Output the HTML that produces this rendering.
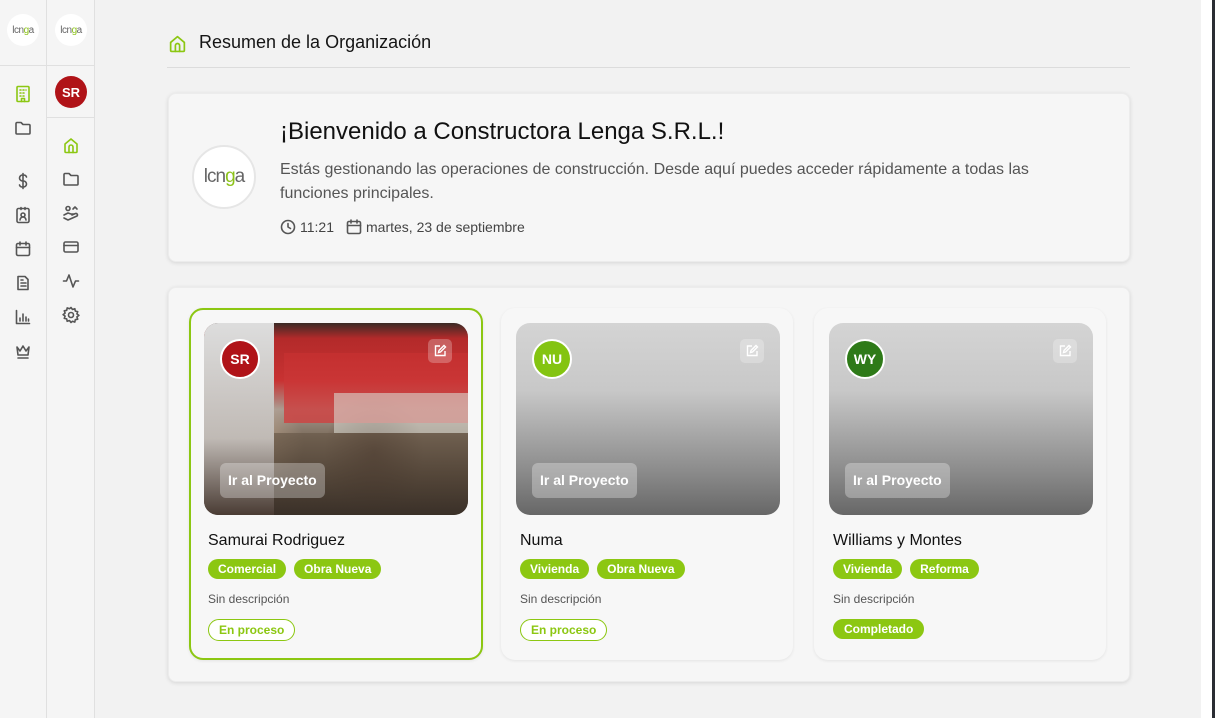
<!DOCTYPE html>
<html><head><meta charset="utf-8"><style>
*{box-sizing:border-box;margin:0;padding:0}
body{width:1215px;height:718px;overflow:hidden;background:#f2f2f2;font-family:"Liberation Sans",sans-serif;position:relative;color:#1a1a1a}
.abs{position:absolute}
.sb1{left:0;top:0;width:47px;height:718px;background:#f5f5f5;border-right:1px solid #e0e0e0}
.sb2{left:47px;top:0;width:48px;height:718px;background:#f5f5f5;border-right:1px solid #e0e0e0}
.logo{width:32px;height:32px;border-radius:50%;background:#fff;font-size:10px;color:#666;display:flex;align-items:center;justify-content:center;letter-spacing:-0.5px}
.logo b{color:#8cc21a;font-weight:normal}
.ic{position:absolute;width:18px;height:18px;fill:none;stroke:#555;stroke-width:1.6;stroke-linecap:round;stroke-linejoin:round}
.card{background:#f6f6f6;border:1px solid #ececec;border-radius:8px;box-shadow:0 1px 4px rgba(0,0,0,.12)}
.pc{position:absolute;top:308px;height:352px;border-radius:14px;background:#f7f7f7;box-shadow:0 1px 3px rgba(0,0,0,.08)}
.img{position:absolute;left:15px;top:15px;width:264px;height:192px;border-radius:14px;overflow:hidden}
.grey{background:linear-gradient(#d4d4d4 0%,#c8c8c8 35%,#8a8a8a 78%,#676767 100%)}
.av{position:absolute;left:16px;top:16px;width:40px;height:40px;border-radius:50%;color:#fff;font-weight:bold;font-size:14px;display:flex;align-items:center;justify-content:center;border:2px solid #fff}
.ed{position:absolute;right:16px;top:16px;width:24px;height:24px;border-radius:5px;background:rgba(255,255,255,.25);display:flex;align-items:center;justify-content:center}
.go{position:absolute;left:16px;top:140px;height:35px;padding:0 8px;border-radius:6px;background:rgba(255,255,255,.3);color:#fff;font-weight:bold;font-size:14px;line-height:35px}
.nm{position:absolute;left:19px;top:224px;font-size:16px;color:#111}
.tags{position:absolute;left:19px;top:251px;display:flex;gap:8px}
.tag{background:#8cc712;color:#fff;font-weight:bold;font-size:12px;height:20px;line-height:20px;padding:0 10px;border-radius:10px}
.ds{position:absolute;left:19px;top:284px;font-size:12px;color:#555}
.st{position:absolute;left:19px;top:311px;font-size:12px;font-weight:bold;height:22px;line-height:20px;padding:0 10px;border-radius:11px;border:1px solid #8cc712;color:#8cc712}
</style></head><body>
<div class="abs sb1"></div><div class="abs sb2"></div>
<div class="abs" style="left:0;top:65px;width:47px;border-top:1px solid #e0e0e0"></div>
<div class="abs" style="left:47px;top:65px;width:48px;border-top:1px solid #e0e0e0"></div>
<div class="abs" style="left:47px;top:117px;width:48px;border-top:1px solid #e0e0e0"></div>
<div class="abs logo" style="left:7px;top:14px">lcn<b>g</b>a</div>
<div class="abs logo" style="left:55px;top:14px">lcn<b>g</b>a</div>
<div class="abs" style="left:55px;top:76px;width:32px;height:32px;border-radius:50%;background:#b01318;color:#fff;font-weight:bold;font-size:13px;display:flex;align-items:center;justify-content:center">SR</div>
<svg class="ic" style="left:14px;top:85px;stroke:#8cc712" viewBox="0 0 18 18"><rect x="3" y="1.5" width="12" height="15" rx="1"/><path d="M6 5h1M9 5h1M12 5h0M6 8h1M9 8h1M6 11h1M9 11h1M7.5 16.5v-3h3v3"/></svg>
<svg class="ic" style="left:14px;top:119px" viewBox="0 0 18 18"><path d="M2 4.5a1 1 0 0 1 1-1h4l2 2h6a1 1 0 0 1 1 1v7.5a1 1 0 0 1-1 1H3a1 1 0 0 1-1-1z"/></svg>
<svg class="ic" style="left:14px;top:172px" viewBox="0 0 18 18"><path d="M9 1.5v15M12.5 5a3 3 0 0 0-3-2h-1a3 3 0 0 0 0 6h1a3 3 0 0 1 0 6h-1a3 3 0 0 1-3-2"/></svg>
<svg class="ic" style="left:14px;top:206px" viewBox="0 0 18 18"><rect x="3" y="2.5" width="12" height="14" rx="1.5"/><path d="M7 1.5v2M11 1.5v2"/><circle cx="9" cy="9" r="2"/><path d="M6 14a3 3 0 0 1 6 0"/></svg>
<svg class="ic" style="left:14px;top:240px" viewBox="0 0 18 18"><rect x="2.5" y="3.5" width="13" height="12" rx="1.5"/><path d="M6 2v3M12 2v3M2.5 7.5h13"/></svg>
<svg class="ic" style="left:14px;top:274px" viewBox="0 0 18 18"><path d="M4 2.5h7l3 3v10H4z"/><path d="M7 9h5M7 12h5M7 6h2"/></svg>
<svg class="ic" style="left:14px;top:308px" viewBox="0 0 18 18"><path d="M2.5 2.5v13h13M6 13v-3M9 13V6M12 13V9M14.5 13v-2"/></svg>
<svg class="ic" style="left:14px;top:342px" viewBox="0 0 18 18"><path d="M3 5l3 4 3-5 3 5 3-4-1 8H4zM4 16h10"/></svg>
<svg class="ic" style="left:62px;top:136px;stroke:#8cc712" viewBox="0 0 18 18"><path d="M3 8l6-5 6 5v7.5a1 1 0 0 1-1 1H4a1 1 0 0 1-1-1z"/><path d="M7 16.5V11a2 2 0 0 1 4 0v5.5"/></svg>
<svg class="ic" style="left:62px;top:170px" viewBox="0 0 18 18"><path d="M2 4.5a1 1 0 0 1 1-1h4l2 2h6a1 1 0 0 1 1 1v7.5a1 1 0 0 1-1 1H3a1 1 0 0 1-1-1z"/></svg>
<svg class="ic" style="left:62px;top:204px" viewBox="0 0 18 18"><circle cx="6" cy="4.5" r="2"/><path d="M2 11l4-2 3 1h3M2 14l4 2 9-4a1.5 1.5 0 0 0-1.5-2.5L10 11"/><path d="M11 5l2-2 2 2"/></svg>
<svg class="ic" style="left:62px;top:238px" viewBox="0 0 18 18"><rect x="2" y="4" width="14" height="10" rx="1.5"/><path d="M2 7.5h14"/></svg>
<svg class="ic" style="left:62px;top:272px" viewBox="0 0 18 18"><path d="M1.5 9h3l2.5-6 4 12 2.5-6h3"/></svg>
<svg class="ic" style="left:62px;top:306px" viewBox="0 0 18 18"><circle cx="9" cy="9" r="2.5"/><path d="M9 1.5l1.5 2 2.3-.8.5 2.4 2.4.5-.8 2.3 2 1.5-2 1.5.8 2.3-2.4.5-.5 2.4-2.3-.8L9 16.5l-1.5-2-2.3.8-.5-2.4-2.4-.5.8-2.3-2-1.5 2-1.5-.8-2.3 2.4-.5.5-2.4 2.3.8z"/></svg>
<div class="abs" style="left:1201px;top:0;width:11px;height:718px;background:#fff"></div>
<div class="abs" style="left:1212px;top:0;width:3px;height:718px;background:#2a2d33"></div>
<svg class="ic" style="left:168px;top:34px;width:19px;height:19px;stroke:#8cc712" viewBox="0 0 18 18"><path d="M2.5 8l6.5-5.5L15.5 8v7.5a1 1 0 0 1-1 1h-11a1 1 0 0 1-1-1z"/><path d="M7 16.5V11a2 2 0 0 1 4 0v5.5"/></svg>
<div class="abs" style="left:199px;top:32px;font-size:18px;color:#151515">Resumen de la Organización</div>
<div class="abs" style="left:167px;top:67px;width:963px;border-top:1px solid #dcdcdc"></div>
<div class="abs card" style="left:168px;top:93px;width:962px;height:169px"></div>
<div class="abs" style="left:192px;top:145px;width:64px;height:64px;border-radius:50%;background:#fff;border:2px solid #e6e6e6;display:flex;align-items:center;justify-content:center;font-size:19px;color:#666;letter-spacing:-1px">lcn<b style="color:#8cc21a;font-weight:normal">g</b>a</div>
<div class="abs" style="left:280px;top:118px;font-size:24px;color:#111">¡Bienvenido a Constructora Lenga S.R.L.!</div>
<div class="abs" style="left:280px;top:158px;width:800px;font-size:16px;line-height:24px;color:#555">Estás gestionando las operaciones de construcción. Desde aquí puedes acceder rápidamente a todas las funciones principales.</div>
<svg class="ic" style="left:280px;top:219px;width:16px;height:16px" viewBox="0 0 16 16"><circle cx="8" cy="8" r="6.5"/><path d="M8 4.5V8l2.5 1.5"/></svg>
<div class="abs" style="left:300px;top:219px;font-size:14px;color:#444">11:21</div>
<svg class="ic" style="left:346px;top:219px;width:16px;height:16px" viewBox="0 0 16 16"><rect x="1.5" y="2.5" width="13" height="12" rx="1.5"/><path d="M5 1v3M11 1v3M1.5 6.5h13"/></svg>
<div class="abs" style="left:366px;top:219px;font-size:14px;color:#444">martes, 23 de septiembre</div>
<div class="abs card" style="left:168px;top:287px;width:962px;height:395px"></div>
<div class="pc" style="left:189px;width:294px;border:2px solid #8cc712">
 <div class="img" style="left:13px;top:13px;background:
 radial-gradient(ellipse 60px 50px at 40px 120px,rgba(230,200,170,.6),transparent),
 radial-gradient(ellipse 50px 60px at 170px 130px,rgba(60,40,30,.8),transparent),
 linear-gradient(180deg,#3a2a25 0%,#b32a2a 8%,#c83232 30%,#a89a90 45%,#7a6a5a 60%,#5a4a3a 80%,#3a3028 100%);">
  <div class="abs" style="left:0;top:0;width:70px;height:192px;background:linear-gradient(#ddd,#c0bab5 60%,#4a3c34)"></div>
  <div class="abs" style="left:80px;top:30px;width:184px;height:70px;background:linear-gradient(#c63030,#d04040);opacity:.8"></div>
  <div class="abs" style="left:130px;top:70px;width:134px;height:40px;background:#d8d8d0;opacity:.6"></div>
  <div class="abs" style="left:70px;top:110px;width:194px;height:82px;background:linear-gradient(#6a5a4a,#3a3028);opacity:.7"></div>
  <div class="av" style="background:#b01318">SR</div>
  <div class="ed"><svg width="14" height="14" viewBox="0 0 14 14" fill="none" stroke="#fff" stroke-width="1.4"><path d="M7 2H2.5v9.5H12V7M5.5 8.5l.5-2 5-5 1.5 1.5-5 5z"/></svg></div>
  <div class="go">Ir al Proyecto</div>
 </div>
 <div class="nm" style="left:17px;top:222px">Samurai Rodriguez</div>
 <div class="tags" style="left:17px;top:249px"><span class="tag">Comercial</span><span class="tag">Obra Nueva</span></div>
 <div class="ds" style="left:17px;top:282px">Sin descripción</div>
 <div class="st" style="left:17px;top:309px;background:#fff">En proceso</div>
</div>
<div class="pc" style="left:501px;width:292px">
 <div class="img grey">
  <div class="av" style="background:#84c411">NU</div>
  <div class="ed"><svg width="14" height="14" viewBox="0 0 14 14" fill="none" stroke="#fff" stroke-width="1.4"><path d="M7 2H2.5v9.5H12V7M5.5 8.5l.5-2 5-5 1.5 1.5-5 5z"/></svg></div>
  <div class="go">Ir al Proyecto</div>
 </div>
 <div class="nm">Numa</div>
 <div class="tags"><span class="tag">Vivienda</span><span class="tag">Obra Nueva</span></div>
 <div class="ds">Sin descripción</div>
 <div class="st" style="background:#fff">En proceso</div>
</div>
<div class="pc" style="left:814px;width:292px">
 <div class="img grey">
  <div class="av" style="background:#2e7a18">WY</div>
  <div class="ed"><svg width="14" height="14" viewBox="0 0 14 14" fill="none" stroke="#fff" stroke-width="1.4"><path d="M7 2H2.5v9.5H12V7M5.5 8.5l.5-2 5-5 1.5 1.5-5 5z"/></svg></div>
  <div class="go">Ir al Proyecto</div>
 </div>
 <div class="nm">Williams y Montes</div>
 <div class="tags"><span class="tag">Vivienda</span><span class="tag">Reforma</span></div>
 <div class="ds">Sin descripción</div>
 <div class="st" style="background:#8cc712;color:#fff;height:20px;line-height:18px">Completado</div>
</div>
</body></html>
